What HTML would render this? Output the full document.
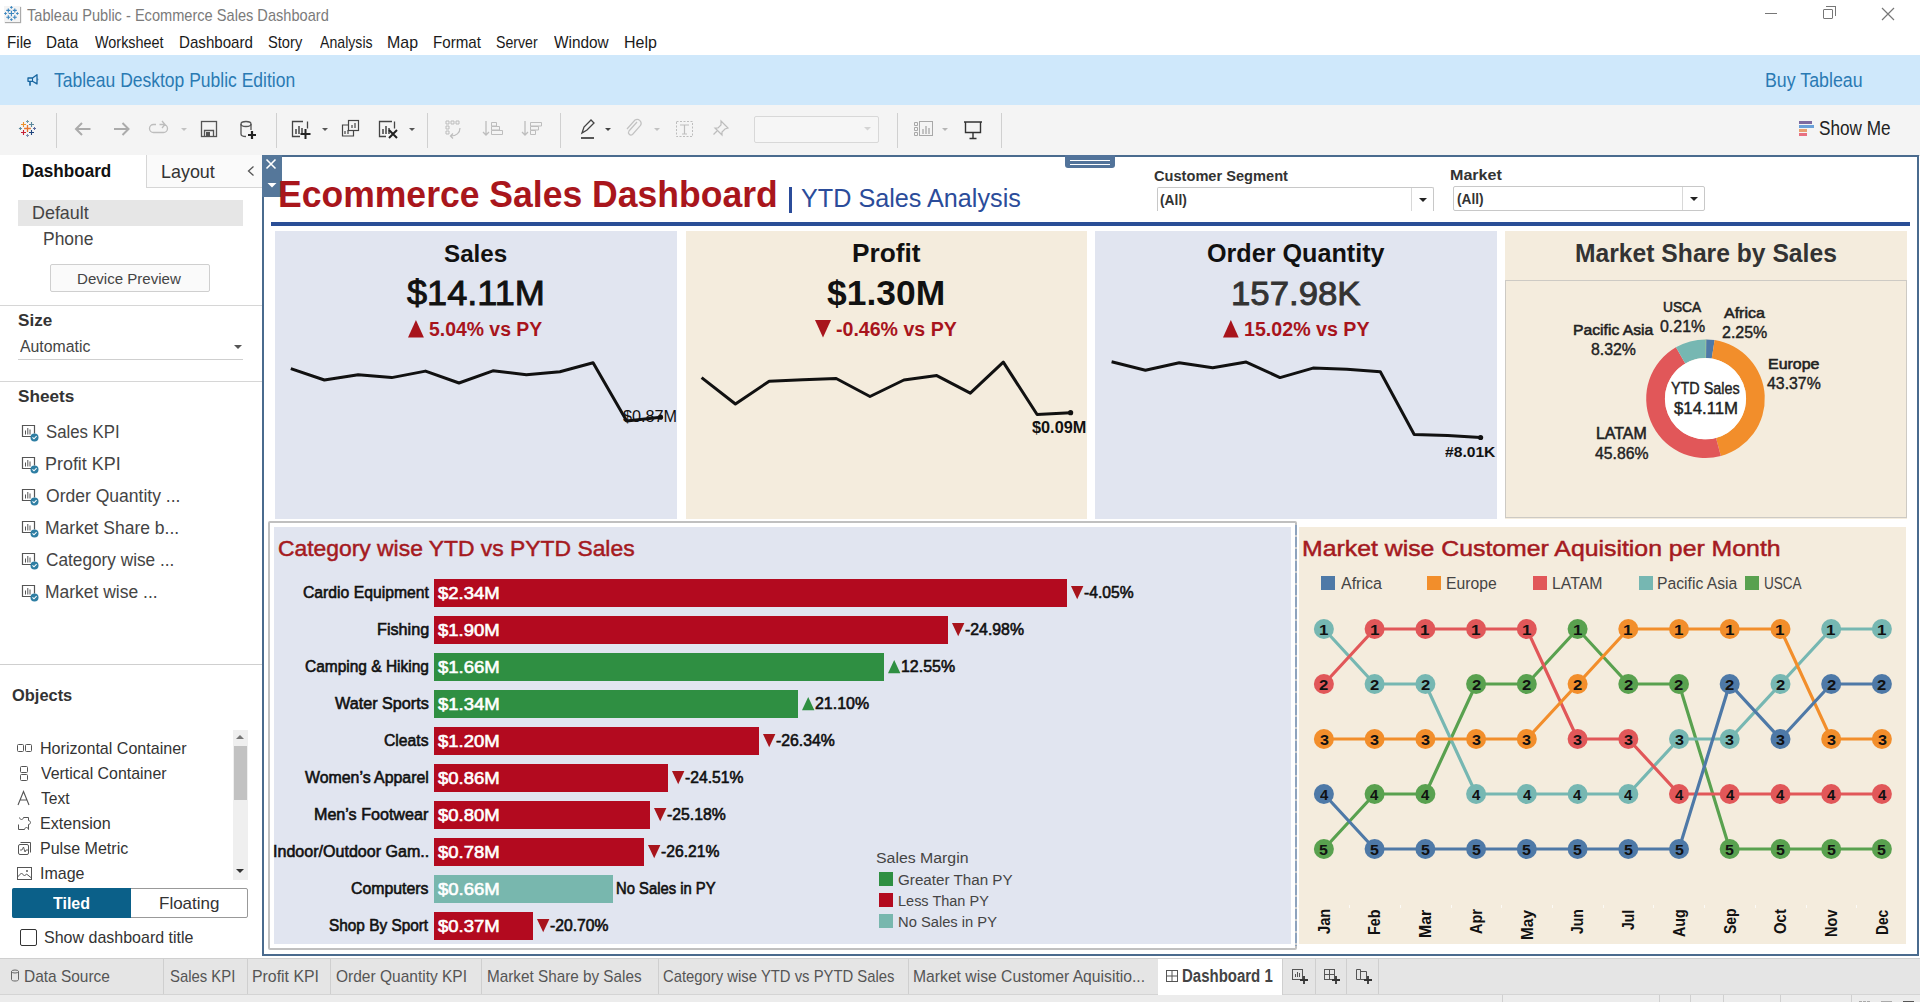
<!DOCTYPE html>
<html><head><meta charset="utf-8">
<style>
*{box-sizing:border-box;margin:0;padding:0}
html,body{width:1920px;height:1002px;overflow:hidden;background:#fff;font-family:"Liberation Sans",sans-serif;}
.a{position:absolute;white-space:nowrap}
#titlebar{left:0;top:0;width:1920px;height:28px;background:#fff}
#menubar{left:0;top:28px;width:1920px;height:27px;background:#fff}
#menubar span{position:absolute;top:6px;font-size:15px;color:#1a1a1a}
#banner{left:0;top:55px;width:1920px;height:50px;background:#cfe8fb}
#toolbar{left:0;top:105px;width:1920px;height:51px;background:#f4f4f4;border-bottom:1px solid #d4d4d4}
.sep{position:absolute;top:113px;width:1px;height:35px;background:#d0d0d0}
#left{left:0;top:155px;width:262px;height:803px;background:#fff}
.hr{position:absolute;height:1px;background:#d6d6d6}
#tabs{left:0;top:958px;width:1920px;height:44px;background:#e5e5e5}
.tab{position:absolute;top:0;height:35px;font-size:15px;color:#555;line-height:35px;border-right:1px solid #cfcfcf}
</style></head><body>
<!-- title bar -->
<div class="a" id="titlebar"></div>
<div class="a" style="left:4px;top:6px;width:16px;height:16px;background:#f4f4f4;box-shadow:1px 1px 1px #aaa"></div><svg class="a" style="left:0;top:0" width="24" height="26"><path d="M8.7 13.5h5.4M11.4 10.8v5.4" stroke="#3a85be" stroke-width="1.1"/><path d="M6.300000000000001 10.4h4M8.3 8.4v4" stroke="#3a85be" stroke-width="1.1"/><path d="M12.8 10.4h4M14.8 8.4v4" stroke="#3a85be" stroke-width="1.1"/><path d="M6.300000000000001 17.2h4M8.3 15.2v4" stroke="#3a85be" stroke-width="1.1"/><path d="M12.8 17.2h4M14.8 15.2v4" stroke="#3a85be" stroke-width="1.1"/><path d="M10.1 7.4h2.6M11.4 6.1000000000000005v2.6" stroke="#3a85be" stroke-width="1"/><path d="M10.1 19.6h2.6M11.4 18.3v2.6" stroke="#3a85be" stroke-width="1"/><path d="M4.2 13.5h2.6M5.5 12.2v2.6" stroke="#3a85be" stroke-width="1"/><path d="M16.099999999999998 13.5h2.6M17.4 12.2v2.6" stroke="#3a85be" stroke-width="1"/></svg>
<div class="a" style="left:1765px;top:13px;width:12px;height:1px;background:#777"></div>
<div class="a" style="left:1823px;top:9px;width:10px;height:10px;border:1px solid #777;border-radius:1px"></div>
<div class="a" style="left:1826px;top:6px;width:10px;height:10px;border-top:1px solid #777;border-right:1px solid #777"></div>
<svg class="a" style="left:1881px;top:7px" width="14" height="14"><path d="M1 1L13 13M13 1L1 13" stroke="#777" stroke-width="1.2"/></svg>
<!-- menu -->
<div class="a" id="menubar">
</div>
<!-- banner -->
<div class="a" id="banner"></div>
<svg class="a" style="left:0;top:55px" width="50" height="50" viewBox="0 55 50 50"><path d="M28 78h4.5l4.5-3.3v9.2l-4.5-2.6H28z" fill="none" stroke="#16649f" stroke-width="1.3" stroke-linejoin="round"/><path d="M32.5 78v3.3" stroke="#16649f" stroke-width="1.1"/><path d="M37.5 78.3a1.3 1.3 0 0 1 0 2.4z" fill="#16649f"/><rect x="29.2" y="81.3" width="1.6" height="4.4" fill="#16649f"/></svg>
<!-- toolbar -->
<div class="a" id="toolbar"></div>
<div class="sep" style="left:56px"></div><div class="sep" style="left:276px"></div><div class="sep" style="left:427px"></div><div class="sep" style="left:560px"></div><div class="sep" style="left:897px"></div><div class="sep" style="left:1001px"></div>
<div class="a" style="left:754px;top:116px;width:125px;height:27px;border:1px solid #d8d8d8;border-radius:2px;background:#f6f6f6"></div>
<svg class="a" style="left:0;top:105px" width="1010" height="50" viewBox="0 105 1010 50">
<g stroke-width="2" fill="none">
<!-- tableau logo -->
<path d="M24.1 128.5h6.8M27.5 125.1v6.8" stroke="#e8762d" stroke-width="1.3"/><path d="M21.0 124.5h5.0M23.5 122.0v5.0" stroke="#eb912b" stroke-width="1.1"/><path d="M29.0 124.5h5.0M31.5 122.0v5.0" stroke="#59879b" stroke-width="1.1"/><path d="M21.0 132.5h5.0M23.5 130.0v5.0" stroke="#c72035" stroke-width="1.1"/><path d="M29.0 132.5h5.0M31.5 130.0v5.0" stroke="#1f457e" stroke-width="1.1"/><path d="M26.0 121.5h3.0M27.5 120.0v3.0" stroke="#7199a6" stroke-width="1.0"/><path d="M26.0 135.5h3.0M27.5 134.0v3.0" stroke="#7b8cb0" stroke-width="1.0"/><path d="M18.9 128.5h3.0M20.4 127.0v3.0" stroke="#59879b" stroke-width="1.0"/><path d="M33.0 128.5h3.0M34.5 127.0v3.0" stroke="#5f6c9f" stroke-width="1.0"/>
<!-- back / fwd -->
<path d="M90.5 129H76M82 123l-6 6 6 6" stroke="#ababab"/>
<path d="M114 129h14.5M122.5 123l6 6-6 6" stroke="#ababab"/>
<path d="M156 124.5h-2.5a4 4 0 0 0 0 8h10a4 4 0 0 0 0-8h-4M162 121l3 3.5-3 3.5" stroke="#bdbdbd" stroke-width="1.3"/>
<path d="M181 128h6l-3 3z" fill="#c2c2c2" stroke="none"/>
<!-- save -->
<rect x="201.5" y="121.5" width="15" height="15" stroke="#555" stroke-width="1.3"/>
<path d="M204.5 136.5v-6h9v6" stroke="#555" stroke-width="1.3"/><rect x="206" y="132" width="4" height="4" fill="#555" stroke="none"/>
<!-- db+ -->
<path d="M241 124v10c0 1.5 2 2.5 5 2.5M251 124v6" stroke="#555" stroke-width="1.3"/><ellipse cx="246" cy="124" rx="5" ry="2.5" stroke="#555" stroke-width="1.3"/>
<path d="M252 131v8M248 135h8" stroke="#222" stroke-width="2.2"/>
<!-- new sheet -->
<path d="M303 121.5h-10.5v15H300M307.5 121.5v7" stroke="#444" stroke-width="1.3"/><path d="M296 134v-5M299 134v-8M302 134v-6" stroke="#444" stroke-width="1.5"/>
<path d="M305.5 129v10M300.5 134h10" stroke="#222" stroke-width="2"/>
<path d="M322 128h6l-3 3z" fill="#555" stroke="none"/>
<!-- duplicate -->
<rect x="348.5" y="120.5" width="10" height="10" stroke="#444" stroke-width="1.2"/><path d="M348.5 125h-6v11h11v-5.5" stroke="#444" stroke-width="1.2"/><path d="M352 128v-3M355 128v-5M345 134v-3M348 134v-4" stroke="#444" stroke-width="1.2"/>
<!-- clear sheet -->
<path d="M392 121.5h-12.5v15H386M394.5 121.5v7" stroke="#444" stroke-width="1.3"/><path d="M383 134v-5M386 134v-8M389 134v-6" stroke="#444" stroke-width="1.5"/>
<path d="M389 130l8 8M397 130l-8 8" stroke="#222" stroke-width="2"/>
<path d="M409 128h6l-3 3z" fill="#555" stroke="none"/>
<!-- swap -->
<path d="M446 121h3v3h-3zM451 121h3v3h-3zM456 121h3v3h-3zM446 126h3v3h-3zM446 131h3v3h-3z" stroke="#bcbcbc" stroke-width="1"/><path d="M460 128c0 5-4 8-9 8M453 133.5l-2.5 2.5 2.5 2.5" stroke="#bcbcbc" stroke-width="1.2"/>
<!-- sort -->
<path d="M486 121v14M483 132l3 3 3-3" stroke="#bdbdbd" stroke-width="1.3"/><path d="M491.5 122.5h5v3.5h-5zM491.5 126.5h8v3.5h-8zM491.5 130.5h11v4h-11z" stroke="#bdbdbd" stroke-width="1"/>
<path d="M525 121v14M522 132l3 3 3-3" stroke="#bdbdbd" stroke-width="1.3"/><path d="M530.5 122.5h11v3.5h-11zM530.5 126.5h8v3.5h-8zM530.5 130.5h5v4h-5z" stroke="#bdbdbd" stroke-width="1"/>
<!-- highlighter -->
<path d="M582 133l2-6 7-7 3 3-7 7z" stroke="#444" stroke-width="1.3"/><path d="M581 138h13" stroke="#444" stroke-width="1.8"/>
<path d="M605 128h6l-3 3z" fill="#444" stroke="none"/>
<!-- clip -->
<path d="M637 122l-8 9a2.5 2.5 0 0 0 3.5 3.5l8-9a4 4 0 0 0-5.5-5.5l-8 9" stroke="#c2c2c2" stroke-width="1.2"/>
<path d="M654 128h6l-3 3z" fill="#c2c2c2" stroke="none"/>
<!-- T -->
<rect x="676.5" y="121.5" width="16" height="15" stroke="#bdbdbd" stroke-width="1" stroke-dasharray="2 1.5"/><path d="M680 125h9M684.5 125v9M682 134h5" stroke="#bdbdbd" stroke-width="1.2"/>
<!-- pin -->
<path d="M721 121l7 7-3 1-3 3 0 3-7-7 3 0 3-3z M717 131l-3.5 3.5" stroke="#bdbdbd" stroke-width="1.2"/>
<path d="M864 127h7l-3.5 3.5z" fill="#d4d4d4" stroke="none"/>
<!-- cards -->
<path d="M914.5 122.5h3v3h-3zM914.5 127.5h3v3h-3zM914.5 132.5h3v3h-3z" stroke="#a8a8a8" stroke-width="1"/><rect x="919.5" y="121.5" width="13" height="14" stroke="#a8a8a8" stroke-width="1"/><path d="M923 134v-5M926 134v-8M929 134v-6" stroke="#a8a8a8" stroke-width="1.3"/>
<path d="M942 128h6l-3 3z" fill="#b5b5b5" stroke="none"/>
<!-- presentation -->
<path d="M964 122h18M965.5 122.5v10h15v-10M973 132.5v6M969.5 138.5h7" stroke="#333" stroke-width="1.4"/>
</g></svg>
<div class="a" style="left:1799px;top:121px;width:13px;height:3px;background:#7d6aa0"></div>
<div class="a" style="left:1799px;top:125px;width:15px;height:3px;background:#6aa0d8"></div>
<div class="a" style="left:1799px;top:129px;width:8px;height:3px;background:#e8a070"></div>
<div class="a" style="left:1799px;top:133px;width:8px;height:3px;background:#e87080"></div>

<!-- left panel -->
<div class="a" id="left"></div>
<div class="a" style="left:146px;top:155px;width:116px;height:33px;background:#fafafa;border-left:1px solid #d6d6d6;border-bottom:1px solid #d6d6d6"></div>
<div class="hr" style="left:0;top:187px;width:146px;background:#fff"></div>
<div class="a" style="left:18px;top:200px;width:225px;height:26px;background:#e6e6e6"></div>
<div class="a" style="left:50px;top:264px;width:160px;height:28px;border:1px solid #cfcfcf;border-radius:2px;background:#fafafa;text-align:center;font-size:15px;line-height:26px;color:#444"></div>
<div class="hr" style="left:0;top:305px;width:262px"></div>
<div class="a" style="left:234px;top:345px;width:0;height:0;border-left:4px solid transparent;border-right:4px solid transparent;border-top:4px solid #555"></div>
<div class="hr" style="left:18px;top:359px;width:225px;background:#cfcfcf"></div>
<div class="hr" style="left:0;top:381px;width:262px"></div>
<svg class="a" style="left:20px;top:423px" width="22" height="20" viewBox="0 0 22 20"><path d="M12.5 13.5H2.5V2.5h12v8" fill="none" stroke="#555" stroke-width="1.2"/><path d="M5.5 11.5v-4M7.8 11.5v-6.5M10 11.5v-5" stroke="#555" stroke-width="1"/><circle cx="14.5" cy="14.5" r="4" fill="#2e7ea3"/><path d="M12.5 14.3l1.5 1.5 2.6-2.6" fill="none" stroke="#fff" stroke-width="1.1"/></svg>
<svg class="a" style="left:20px;top:455px" width="22" height="20" viewBox="0 0 22 20"><path d="M12.5 13.5H2.5V2.5h12v8" fill="none" stroke="#555" stroke-width="1.2"/><path d="M5.5 11.5v-4M7.8 11.5v-6.5M10 11.5v-5" stroke="#555" stroke-width="1"/><circle cx="14.5" cy="14.5" r="4" fill="#2e7ea3"/><path d="M12.5 14.3l1.5 1.5 2.6-2.6" fill="none" stroke="#fff" stroke-width="1.1"/></svg>
<svg class="a" style="left:20px;top:487px" width="22" height="20" viewBox="0 0 22 20"><path d="M12.5 13.5H2.5V2.5h12v8" fill="none" stroke="#555" stroke-width="1.2"/><path d="M5.5 11.5v-4M7.8 11.5v-6.5M10 11.5v-5" stroke="#555" stroke-width="1"/><circle cx="14.5" cy="14.5" r="4" fill="#2e7ea3"/><path d="M12.5 14.3l1.5 1.5 2.6-2.6" fill="none" stroke="#fff" stroke-width="1.1"/></svg>
<svg class="a" style="left:20px;top:519px" width="22" height="20" viewBox="0 0 22 20"><path d="M12.5 13.5H2.5V2.5h12v8" fill="none" stroke="#555" stroke-width="1.2"/><path d="M5.5 11.5v-4M7.8 11.5v-6.5M10 11.5v-5" stroke="#555" stroke-width="1"/><circle cx="14.5" cy="14.5" r="4" fill="#2e7ea3"/><path d="M12.5 14.3l1.5 1.5 2.6-2.6" fill="none" stroke="#fff" stroke-width="1.1"/></svg>
<svg class="a" style="left:20px;top:551px" width="22" height="20" viewBox="0 0 22 20"><path d="M12.5 13.5H2.5V2.5h12v8" fill="none" stroke="#555" stroke-width="1.2"/><path d="M5.5 11.5v-4M7.8 11.5v-6.5M10 11.5v-5" stroke="#555" stroke-width="1"/><circle cx="14.5" cy="14.5" r="4" fill="#2e7ea3"/><path d="M12.5 14.3l1.5 1.5 2.6-2.6" fill="none" stroke="#fff" stroke-width="1.1"/></svg>
<svg class="a" style="left:20px;top:583px" width="22" height="20" viewBox="0 0 22 20"><path d="M12.5 13.5H2.5V2.5h12v8" fill="none" stroke="#555" stroke-width="1.2"/><path d="M5.5 11.5v-4M7.8 11.5v-6.5M10 11.5v-5" stroke="#555" stroke-width="1"/><circle cx="14.5" cy="14.5" r="4" fill="#2e7ea3"/><path d="M12.5 14.3l1.5 1.5 2.6-2.6" fill="none" stroke="#fff" stroke-width="1.1"/></svg>
<div class="hr" style="left:0;top:664px;width:262px;background:#cfcfcf"></div>
<svg class="a" style="left:16px;top:740.0px" width="18" height="17" viewBox="0 0 18 17"><rect x="1.5" y="4.5" width="6" height="7" rx="1" fill="none" stroke="#555"/><rect x="9.5" y="4.5" width="6" height="7" rx="1" fill="none" stroke="#555"/></svg>
<svg class="a" style="left:16px;top:765.0px" width="18" height="17" viewBox="0 0 18 17"><rect x="4.5" y="1.5" width="7" height="6" rx="1" fill="none" stroke="#555"/><rect x="4.5" y="9.5" width="7" height="6" rx="1" fill="none" stroke="#555"/></svg>
<svg class="a" style="left:16px;top:790.0px" width="18" height="17" viewBox="0 0 18 17"><path d="M2 15L7.5 1.5 13 15M4.5 10h6" fill="none" stroke="#555" stroke-width="1.1"/></svg>
<svg class="a" style="left:16px;top:815.0px" width="18" height="17" viewBox="0 0 18 17"><path d="M2.5 9.5v5h6c0-1 1-2 2-2s2 1 2 2V9.5c1 0 2-1 2-2s-1-2-2-2v-3h-5c0 1-1 2-2 2s-2-1-2-2" fill="none" stroke="#555" stroke-width="1"/></svg>
<svg class="a" style="left:16px;top:840.0px" width="18" height="17" viewBox="0 0 18 17"><rect x="2.5" y="4.5" width="10" height="10" rx="1.5" fill="none" stroke="#555"/><path d="M4.5 2.5h10v10" fill="none" stroke="#555"/><path d="M4 10h2l1.5-3 1.5 5 1-2h2" fill="none" stroke="#555" stroke-width="0.9"/></svg>
<svg class="a" style="left:16px;top:865.0px" width="18" height="17" viewBox="0 0 18 17"><rect x="1.5" y="2.5" width="14" height="12" fill="none" stroke="#555"/><path d="M1.5 12l4-4 3 3 2-2 5 4" fill="none" stroke="#555"/><circle cx="11" cy="6" r="1" fill="#555"/></svg>
<div class="a" style="left:233px;top:730px;width:15px;height:150px;background:#efefef"></div>
<div class="a" style="left:234px;top:746px;width:13px;height:54px;background:#c2c2c2"></div>
<div class="a" style="left:236px;top:735px;width:0;height:0;border-left:4px solid transparent;border-right:4px solid transparent;border-bottom:4px solid #777"></div>
<div class="a" style="left:236px;top:869px;width:0;height:0;border-left:4px solid transparent;border-right:4px solid transparent;border-top:4px solid #333"></div>
<div class="a" style="left:12px;top:888px;width:236px;height:30px;border:1px solid #999;border-radius:2px;background:#fff"></div>
<div class="a" style="left:12px;top:888px;width:119px;height:30px;background:#0b6089;border-radius:2px 0 0 2px;color:#fff;font-weight:bold;font-size:15px;text-align:center;line-height:30px"></div>
<div class="a" style="left:131px;top:888px;width:117px;height:30px;color:#333;font-size:15px;text-align:center;line-height:30px"></div>
<div class="a" style="left:20px;top:929px;width:17px;height:17px;border:1px solid #333;border-radius:2px;background:#fff"></div>

<!-- dashboard -->
<div class="a" style="left:262px;top:155px;width:1657px;height:801px;border:2px solid #4a6b8e;background:#fff"></div>
<div class="a" style="left:262px;top:155px;width:20px;height:42px;background:#55779a"></div>
<svg class="a" style="left:262px;top:155px" width="20" height="42"><path d="M4.5 4.5l9 9M13.5 4.5l-9 9" stroke="#fff" stroke-width="1.6"/><path d="M5.5 28h9l-4.5 4.5z" fill="#fff"/></svg>
<div class="a" style="left:1065px;top:155px;width:50px;height:13px;background:#52739a;border-radius:0 0 3px 3px"></div>
<div class="a" style="left:1070px;top:160px;width:40px;height:1.3px;background:#fff"></div>
<div class="a" style="left:1070px;top:164px;width:40px;height:1.3px;background:#fff"></div>
<div class="a" style="left:277.89px;top:175.74px;font-size:37.25px;line-height:37.25px;font-weight:bold;color:#a9161c;transform:scaleX(0.9540);transform-origin:0 0;">Ecommerce Sales Dashboard</div>
<div class="a" style="left:789px;top:187px;width:3px;height:25.5px;background:#2b4c9a"></div>
<div class="a" style="left:801.07px;top:185.72px;font-size:25.80px;line-height:25.80px;font-weight:normal;color:#2b4c9a;transform:scaleX(0.9766);transform-origin:0 0;">YTD Sales Analysis</div>
<div class="a" style="left:271px;top:222px;width:1639px;height:4px;background:#2a4e96"></div>
<div class="a" style="left:1154.22px;top:168.58px;font-size:14.78px;line-height:14.78px;font-weight:bold;color:#333;transform:scaleX(0.9893);transform-origin:0 0;">Customer Segment</div>
<div class="a" style="left:1157px;top:187px;width:277px;height:24px;border:1px solid #c8c8c8;border-bottom:none;border-radius:2px 2px 0 0;background:#fff"></div>
<div class="a" style="left:1411px;top:188px;width:1px;height:23px;background:#d8d8d8"></div>
<div class="a" style="left:1418.5px;top:197.5px;width:0;height:0;border-left:4px solid transparent;border-right:4px solid transparent;border-top:4.5px solid #222"></div>
<div class="a" style="left:1160.41px;top:192.53px;font-size:14.78px;line-height:14.78px;font-weight:bold;color:#333;transform:scaleX(0.9350);transform-origin:0 0;">(All)</div>
<div class="a" style="left:1449.55px;top:167.53px;font-size:14.78px;line-height:14.78px;font-weight:bold;color:#333;transform:scaleX(1.0895);transform-origin:0 0;">Market</div>
<div class="a" style="left:1453px;top:186px;width:252px;height:25px;border:1px solid #c8c8c8;border-radius:2px;background:#fff"></div>
<div class="a" style="left:1682px;top:187px;width:1px;height:23px;background:#d8d8d8"></div>
<div class="a" style="left:1689.5px;top:196.5px;width:0;height:0;border-left:4px solid transparent;border-right:4px solid transparent;border-top:4.5px solid #222"></div>
<div class="a" style="left:1456.51px;top:190.73px;font-size:15.14px;line-height:15.14px;font-weight:bold;color:#333;transform:scaleX(0.9054);transform-origin:0 0;">(All)</div>
<div class="a" style="left:275px;top:231px;width:402px;height:288px;background:#e1e5f0"></div>
<div class="a" style="left:686px;top:231px;width:401px;height:288px;background:#f4ecdd"></div>
<div class="a" style="left:1095px;top:231px;width:402px;height:288px;background:#e1e5f0"></div>
<div class="a" style="left:1505px;top:231px;width:402px;height:288px;background:#f4ecdd"></div>
<div class="a" style="left:1505px;top:280px;width:402px;height:238px;border:1px solid #cdcac4"></div>
<div class="a" style="left:443.87px;top:241.56px;font-size:24.64px;line-height:24.64px;font-weight:bold;color:#111;transform:scaleX(0.9827);transform-origin:0 0;">Sales</div>
<div class="a" style="left:407.24px;top:275.73px;font-size:34.20px;line-height:34.20px;font-weight:normal;color:#111;transform:scaleX(1.0565);transform-origin:0 0;-webkit-text-stroke:0.9px #111">$14.11M</div>
<div class="a" style="left:429.32px;top:319.52px;font-size:19.57px;line-height:19.57px;font-weight:bold;color:#a8141c;transform:scaleX(0.9913);transform-origin:0 0;">5.04% vs PY</div>
<div class="a" style="left:851.59px;top:240.56px;font-size:24.93px;line-height:24.93px;font-weight:bold;color:#111;transform:scaleX(1.0524);transform-origin:0 0;">Profit</div>
<div class="a" style="left:827.27px;top:275.73px;font-size:34.20px;line-height:34.20px;font-weight:bold;color:#111;transform:scaleX(1.0366);transform-origin:0 0;">$1.30M</div>
<div class="a" style="left:836.02px;top:319.52px;font-size:19.57px;line-height:19.57px;font-weight:bold;color:#a8141c;transform:scaleX(1.0005);transform-origin:0 0;">-0.46% vs PY</div>
<div class="a" style="left:1206.99px;top:240.57px;font-size:25.51px;line-height:25.51px;font-weight:bold;color:#111;transform:scaleX(0.9865);transform-origin:0 0;">Order Quantity</div>
<div class="a" style="left:1230.99px;top:276.72px;font-size:33.91px;line-height:33.91px;font-weight:normal;color:#333;transform:scaleX(1.0256);transform-origin:0 0;-webkit-text-stroke:0.9px #333">157.98K</div>
<div class="a" style="left:1243.82px;top:319.52px;font-size:19.57px;line-height:19.57px;font-weight:bold;color:#a8141c;transform:scaleX(1.0036);transform-origin:0 0;">15.02% vs PY</div>
<svg class="a" style="left:408.2px;top:320.1px" width="16.400000000000034" height="18.099999999999966"><path d="M7.950000000000017 0L15.900000000000034 17.599999999999966H0z" fill="#a8141c"/></svg>
<svg class="a" style="left:815.4px;top:320.1px" width="16.5" height="18.099999999999966"><path d="M0 0H16.0L8.0 17.599999999999966z" fill="#a8141c"/></svg>
<svg class="a" style="left:1223px;top:320.1px" width="16.200000000000045" height="18.099999999999966"><path d="M7.850000000000023 0L15.700000000000045 17.599999999999966H0z" fill="#a8141c"/></svg>
<svg class="a" style="left:0;top:0" width="1920" height="1002">
<path d="M290.8 368.7 L324.4 380.0 L358.2 374.7 L391.7 377.6 L425.5 371.1 L459.0 383.0 L492.9 370.8 L526.4 374.7 L559.9 371.7 L593.1 362.7 L626.7 421.0 L660.5 417.2" fill="none" stroke="#111" stroke-width="3" stroke-linejoin="round"/>
<circle cx="660.5" cy="417.2" r="2.6" fill="#111"/>
<path d="M701.6 377.6 L735.4 404.0 L769.2 381.2 L802.7 379.7 L836.2 378.5 L870.0 396.5 L903.9 380.0 L936.8 375.6 L970.3 393.2 L1003.3 362.1 L1037.1 414.5 L1070.6 412.7" fill="none" stroke="#111" stroke-width="3" stroke-linejoin="round"/>
<circle cx="1070.6" cy="412.7" r="2.6" fill="#111"/>
<path d="M1111.6 361.8 L1145.4 370.2 L1179.2 362.7 L1212.7 367.8 L1246.2 362.1 L1280.0 377.6 L1313.0 368.1 L1346.8 369.3 L1380.3 371.7 L1414.2 434.5 L1447.7 435.4 L1480.6 437.5" fill="none" stroke="#111" stroke-width="3" stroke-linejoin="round"/>
<circle cx="1480.6" cy="437.5" r="2.6" fill="#111"/>
</svg>
<div class="a" style="left:622.64px;top:407.68px;font-size:16.38px;line-height:16.38px;font-weight:normal;color:#111;transform:scaleX(0.9898);transform-origin:0 0;">$0.87M</div>
<div class="a" style="left:1032.36px;top:419.55px;font-size:15.94px;line-height:15.94px;font-weight:bold;color:#111;transform:scaleX(1.0214);transform-origin:0 0;">$0.09M</div>
<div class="a" style="left:1445.37px;top:443.67px;font-size:15.22px;line-height:15.22px;font-weight:bold;color:#111;transform:scaleX(1.0268);transform-origin:0 0;">#8.01K</div>
<div class="a" style="left:1575.10px;top:239.68px;font-size:26.09px;line-height:26.09px;font-weight:bold;color:#333;transform:scaleX(0.9458);transform-origin:0 0;">Market Share by Sales</div>
<svg class="a" style="left:0;top:0" width="1920" height="1002">
<path d="M1705.50 339.40A59.3 59.3 0 0 1 1706.28 339.41L1706.04 358.10A40.6 40.6 0 0 0 1705.50 358.10z" fill="#59a14f"/>
<path d="M1706.28 339.41A59.3 59.3 0 0 1 1714.63 340.11L1711.75 358.58A40.6 40.6 0 0 0 1706.04 358.10z" fill="#4e79a7"/>
<path d="M1714.63 340.11A59.3 59.3 0 0 1 1720.86 455.98L1716.02 437.91A40.6 40.6 0 0 0 1711.75 358.58z" fill="#f28e2b"/>
<path d="M1720.86 455.98A59.3 59.3 0 0 1 1675.93 347.30L1685.25 363.51A40.6 40.6 0 0 0 1716.02 437.91z" fill="#e15759"/>
<path d="M1675.93 347.30A59.3 59.3 0 0 1 1705.50 339.40L1705.50 358.10A40.6 40.6 0 0 0 1685.25 363.51z" fill="#76b7b2"/>
<circle cx="1705.5" cy="398.7" r="40.6" fill="#fff"/>
</svg>
<div class="a" style="left:1662.77px;top:299.68px;font-size:14.78px;line-height:14.78px;font-weight:normal;color:#222;transform:scaleX(0.9320);transform-origin:0 0;-webkit-text-stroke:0.55px #222">USCA</div>
<div class="a" style="left:1659.96px;top:318.75px;font-size:15.65px;line-height:15.65px;font-weight:normal;color:#222;transform:scaleX(1.0185);transform-origin:0 0;-webkit-text-stroke:0.4px #222">0.21%</div>
<div class="a" style="left:1723.80px;top:305.58px;font-size:14.78px;line-height:14.78px;font-weight:normal;color:#222;transform:scaleX(1.0829);transform-origin:0 0;-webkit-text-stroke:0.55px #222">Africa</div>
<div class="a" style="left:1721.70px;top:324.65px;font-size:15.65px;line-height:15.65px;font-weight:normal;color:#222;transform:scaleX(1.0222);transform-origin:0 0;-webkit-text-stroke:0.4px #222">2.25%</div>
<div class="a" style="left:1572.74px;top:321.69px;font-size:15.07px;line-height:15.07px;font-weight:normal;color:#222;transform:scaleX(1.0420);transform-origin:0 0;-webkit-text-stroke:0.55px #222">Pacific Asia</div>
<div class="a" style="left:1590.69px;top:341.75px;font-size:15.65px;line-height:15.65px;font-weight:normal;color:#222;transform:scaleX(1.0134);transform-origin:0 0;-webkit-text-stroke:0.4px #222">8.32%</div>
<div class="a" style="left:1767.93px;top:356.65px;font-size:14.35px;line-height:14.35px;font-weight:normal;color:#222;transform:scaleX(1.1107);transform-origin:0 0;-webkit-text-stroke:0.55px #222">Europe</div>
<div class="a" style="left:1767.08px;top:375.60px;font-size:15.65px;line-height:15.65px;font-weight:normal;color:#222;transform:scaleX(1.0138);transform-origin:0 0;-webkit-text-stroke:0.4px #222">43.37%</div>
<div class="a" style="left:1671.34px;top:380.75px;font-size:15.65px;line-height:15.65px;font-weight:normal;color:#222;transform:scaleX(0.9191);transform-origin:0 0;-webkit-text-stroke:0.4px #222">YTD Sales</div>
<div class="a" style="left:1674.23px;top:400.70px;font-size:15.65px;line-height:15.65px;font-weight:normal;color:#222;transform:scaleX(1.0720);transform-origin:0 0;-webkit-text-stroke:0.4px #222">$14.11M</div>
<div class="a" style="left:1596.43px;top:425.65px;font-size:15.65px;line-height:15.65px;font-weight:normal;color:#222;transform:scaleX(1.0159);transform-origin:0 0;-webkit-text-stroke:0.55px #222">LATAM</div>
<div class="a" style="left:1595.28px;top:445.60px;font-size:15.65px;line-height:15.65px;font-weight:normal;color:#222;transform:scaleX(1.0100);transform-origin:0 0;-webkit-text-stroke:0.4px #222">45.86%</div>
<div class="a" style="left:268px;top:521px;width:1029px;height:429px;border:2px solid #c0c0c0;border-radius:2px"></div>
<div class="a" style="left:1295px;top:525px;width:2px;height:421px;background:repeating-linear-gradient(#8ea3bd 0 10px,#cfcfcf 10px 12px)"></div>
<div class="a" style="left:274px;top:527px;width:1017px;height:417px;background:#e1e5f0"></div>
<div class="a" style="left:277.76px;top:536.59px;font-size:22.90px;line-height:22.90px;font-weight:normal;color:#a51a1f;transform:scaleX(0.9987);transform-origin:0 0;-webkit-text-stroke:0.5px #a51a1f">Category wise YTD vs PYTD Sales</div>
<div class="a" style="left:434px;top:579px;width:633.0px;height:28px;background:#b30a1f"></div>
<div class="a" style="left:302.51px;top:583.50px;font-size:16.23px;line-height:16.23px;font-weight:normal;color:#111;transform:scaleX(0.9693);transform-origin:0 0;-webkit-text-stroke:0.6px #111">Cardio Equipment</div>
<div class="a" style="left:438.42px;top:585.58px;font-size:16.67px;line-height:16.67px;font-weight:normal;color:#fff;transform:scaleX(1.1094);transform-origin:0 0;-webkit-text-stroke:0.6px #fff">$2.34M</div>
<svg class="a" style="left:1071.3px;top:585.9px" width="12.900000000000091" height="13.700000000000045"><path d="M0 0H12.400000000000091L6.2000000000000455 13.200000000000045z" fill="#a8141c"/></svg>
<div class="a" style="left:1084.10px;top:584.57px;font-size:15.80px;line-height:15.80px;font-weight:normal;color:#111;transform:scaleX(0.9895);transform-origin:0 0;-webkit-text-stroke:0.6px #111">-4.05%</div>
<div class="a" style="left:434px;top:616px;width:513.9px;height:28px;background:#b30a1f"></div>
<div class="a" style="left:377.10px;top:620.50px;font-size:16.23px;line-height:16.23px;font-weight:normal;color:#111;transform:scaleX(0.9981);transform-origin:0 0;-webkit-text-stroke:0.6px #111">Fishing</div>
<div class="a" style="left:438.42px;top:622.58px;font-size:16.67px;line-height:16.67px;font-weight:normal;color:#fff;transform:scaleX(1.1094);transform-origin:0 0;-webkit-text-stroke:0.6px #fff">$1.90M</div>
<svg class="a" style="left:952.1999999999999px;top:622.9px" width="12.899999999999977" height="13.700000000000045"><path d="M0 0H12.399999999999977L6.199999999999989 13.200000000000045z" fill="#a8141c"/></svg>
<div class="a" style="left:964.99px;top:621.57px;font-size:15.80px;line-height:15.80px;font-weight:normal;color:#111;transform:scaleX(1.0021);transform-origin:0 0;-webkit-text-stroke:0.6px #111">-24.98%</div>
<div class="a" style="left:434px;top:653px;width:450.1px;height:28px;background:#2f8f42"></div>
<div class="a" style="left:305.22px;top:657.50px;font-size:16.23px;line-height:16.23px;font-weight:normal;color:#111;transform:scaleX(0.9549);transform-origin:0 0;-webkit-text-stroke:0.6px #111">Camping &amp; Hiking</div>
<div class="a" style="left:438.42px;top:659.58px;font-size:16.67px;line-height:16.67px;font-weight:normal;color:#fff;transform:scaleX(1.1094);transform-origin:0 0;-webkit-text-stroke:0.6px #fff">$1.66M</div>
<svg class="a" style="left:888.4px;top:659.9px" width="12.899999999999977" height="13.700000000000045"><path d="M6.199999999999989 0L12.399999999999977 13.200000000000045H0z" fill="#2f8f42"/></svg>
<div class="a" style="left:900.70px;top:658.57px;font-size:15.80px;line-height:15.80px;font-weight:normal;color:#111;transform:scaleX(1.0098);transform-origin:0 0;-webkit-text-stroke:0.6px #111">12.55%</div>
<div class="a" style="left:434px;top:690px;width:363.9px;height:28px;background:#2f8f42"></div>
<div class="a" style="left:334.92px;top:694.50px;font-size:16.23px;line-height:16.23px;font-weight:normal;color:#111;transform:scaleX(0.9979);transform-origin:0 0;-webkit-text-stroke:0.6px #111">Water Sports</div>
<div class="a" style="left:438.42px;top:696.58px;font-size:16.67px;line-height:16.67px;font-weight:normal;color:#fff;transform:scaleX(1.1094);transform-origin:0 0;-webkit-text-stroke:0.6px #fff">$1.34M</div>
<svg class="a" style="left:802.1999999999999px;top:696.9px" width="12.899999999999977" height="13.700000000000045"><path d="M6.199999999999989 0L12.399999999999977 13.200000000000045H0z" fill="#2f8f42"/></svg>
<div class="a" style="left:814.90px;top:695.57px;font-size:15.80px;line-height:15.80px;font-weight:normal;color:#111;transform:scaleX(1.0098);transform-origin:0 0;-webkit-text-stroke:0.6px #111">21.10%</div>
<div class="a" style="left:434px;top:727px;width:324.9px;height:28px;background:#b30a1f"></div>
<div class="a" style="left:384.31px;top:731.50px;font-size:16.23px;line-height:16.23px;font-weight:normal;color:#111;transform:scaleX(0.9678);transform-origin:0 0;-webkit-text-stroke:0.6px #111">Cleats</div>
<div class="a" style="left:438.42px;top:733.58px;font-size:16.67px;line-height:16.67px;font-weight:normal;color:#fff;transform:scaleX(1.1094);transform-origin:0 0;-webkit-text-stroke:0.6px #fff">$1.20M</div>
<svg class="a" style="left:763.1999999999999px;top:733.9px" width="12.899999999999977" height="13.700000000000045"><path d="M0 0H12.399999999999977L6.199999999999989 13.200000000000045z" fill="#a8141c"/></svg>
<div class="a" style="left:775.99px;top:732.57px;font-size:15.80px;line-height:15.80px;font-weight:normal;color:#111;transform:scaleX(0.9986);transform-origin:0 0;-webkit-text-stroke:0.6px #111">-26.34%</div>
<div class="a" style="left:434px;top:764px;width:233.9px;height:28px;background:#b30a1f"></div>
<div class="a" style="left:305.42px;top:768.50px;font-size:16.23px;line-height:16.23px;font-weight:normal;color:#111;transform:scaleX(0.9787);transform-origin:0 0;-webkit-text-stroke:0.6px #111">Women’s Apparel</div>
<div class="a" style="left:438.42px;top:770.58px;font-size:16.67px;line-height:16.67px;font-weight:normal;color:#fff;transform:scaleX(1.1094);transform-origin:0 0;-webkit-text-stroke:0.6px #fff">$0.86M</div>
<svg class="a" style="left:672.1999999999999px;top:770.9px" width="12.899999999999977" height="13.700000000000045"><path d="M0 0H12.399999999999977L6.199999999999989 13.200000000000045z" fill="#a8141c"/></svg>
<div class="a" style="left:684.99px;top:769.57px;font-size:15.80px;line-height:15.80px;font-weight:normal;color:#111;transform:scaleX(0.9934);transform-origin:0 0;-webkit-text-stroke:0.6px #111">-24.51%</div>
<div class="a" style="left:434px;top:801px;width:216.0px;height:28px;background:#b30a1f"></div>
<div class="a" style="left:314.21px;top:805.50px;font-size:16.23px;line-height:16.23px;font-weight:normal;color:#111;transform:scaleX(0.9928);transform-origin:0 0;-webkit-text-stroke:0.6px #111">Men’s Footwear</div>
<div class="a" style="left:438.42px;top:807.58px;font-size:16.67px;line-height:16.67px;font-weight:normal;color:#fff;transform:scaleX(1.1094);transform-origin:0 0;-webkit-text-stroke:0.6px #fff">$0.80M</div>
<svg class="a" style="left:654.3px;top:807.9px" width="12.899999999999977" height="13.700000000000045"><path d="M0 0H12.399999999999977L6.199999999999989 13.200000000000045z" fill="#a8141c"/></svg>
<div class="a" style="left:667.09px;top:806.57px;font-size:15.80px;line-height:15.80px;font-weight:normal;color:#111;transform:scaleX(0.9986);transform-origin:0 0;-webkit-text-stroke:0.6px #111">-25.18%</div>
<div class="a" style="left:434px;top:838px;width:210.1px;height:28px;background:#b30a1f"></div>
<div class="a" style="left:273.45px;top:842.50px;font-size:16.23px;line-height:16.23px;font-weight:normal;color:#111;transform:scaleX(0.9901);transform-origin:0 0;-webkit-text-stroke:0.6px #111">Indoor/Outdoor Gam..</div>
<div class="a" style="left:438.42px;top:844.58px;font-size:16.67px;line-height:16.67px;font-weight:normal;color:#fff;transform:scaleX(1.1094);transform-origin:0 0;-webkit-text-stroke:0.6px #fff">$0.78M</div>
<svg class="a" style="left:648.4px;top:844.9px" width="12.899999999999977" height="13.700000000000045"><path d="M0 0H12.399999999999977L6.199999999999989 13.200000000000045z" fill="#a8141c"/></svg>
<div class="a" style="left:661.19px;top:843.57px;font-size:15.80px;line-height:15.80px;font-weight:normal;color:#111;transform:scaleX(0.9934);transform-origin:0 0;-webkit-text-stroke:0.6px #111">-26.21%</div>
<div class="a" style="left:434px;top:875px;width:178.9px;height:28px;background:#78b7ae"></div>
<div class="a" style="left:351.31px;top:879.50px;font-size:16.23px;line-height:16.23px;font-weight:normal;color:#111;transform:scaleX(0.9770);transform-origin:0 0;-webkit-text-stroke:0.6px #111">Computers</div>
<div class="a" style="left:438.42px;top:881.58px;font-size:16.67px;line-height:16.67px;font-weight:normal;color:#fff;transform:scaleX(1.1094);transform-origin:0 0;-webkit-text-stroke:0.6px #fff">$0.66M</div>
<div class="a" style="left:616.32px;top:880.55px;font-size:15.94px;line-height:15.94px;font-weight:normal;color:#111;transform:scaleX(0.9288);transform-origin:0 0;-webkit-text-stroke:0.6px #111">No Sales in PY</div>
<div class="a" style="left:434px;top:912px;width:99.0px;height:28px;background:#b30a1f"></div>
<div class="a" style="left:329.21px;top:916.50px;font-size:16.23px;line-height:16.23px;font-weight:normal;color:#111;transform:scaleX(0.9480);transform-origin:0 0;-webkit-text-stroke:0.6px #111">Shop By Sport</div>
<div class="a" style="left:438.42px;top:918.58px;font-size:16.67px;line-height:16.67px;font-weight:normal;color:#fff;transform:scaleX(1.1094);transform-origin:0 0;-webkit-text-stroke:0.6px #fff">$0.37M</div>
<svg class="a" style="left:537.3px;top:918.9px" width="12.899999999999977" height="13.700000000000045"><path d="M0 0H12.399999999999977L6.199999999999989 13.200000000000045z" fill="#a8141c"/></svg>
<div class="a" style="left:550.09px;top:917.57px;font-size:15.80px;line-height:15.80px;font-weight:normal;color:#111;transform:scaleX(0.9934);transform-origin:0 0;-webkit-text-stroke:0.6px #111">-20.70%</div>
<div class="a" style="left:875.79px;top:850.71px;font-size:14.93px;line-height:14.93px;font-weight:normal;color:#444;transform:scaleX(1.0625);transform-origin:0 0;">Sales Margin</div>
<div class="a" style="left:879px;top:872.1px;width:14px;height:14px;background:#2f8f42"></div>
<div class="a" style="left:897.94px;top:871.57px;font-size:15.22px;line-height:15.22px;font-weight:normal;color:#444;transform:scaleX(0.9985);transform-origin:0 0;">Greater Than PY</div>
<div class="a" style="left:879px;top:893.1px;width:14px;height:14px;background:#b30a1f"></div>
<div class="a" style="left:897.54px;top:892.57px;font-size:15.22px;line-height:15.22px;font-weight:normal;color:#444;transform:scaleX(0.9526);transform-origin:0 0;">Less Than PY</div>
<div class="a" style="left:879px;top:914.1px;width:14px;height:14px;background:#78b7ae"></div>
<div class="a" style="left:897.52px;top:913.57px;font-size:15.22px;line-height:15.22px;font-weight:normal;color:#444;transform:scaleX(0.9671);transform-origin:0 0;">No Sales in PY</div>
<div class="a" style="left:1299px;top:527px;width:607px;height:417px;background:#f4ecdd"></div>
<div class="a" style="left:1302.41px;top:537.66px;font-size:22.46px;line-height:22.46px;font-weight:normal;color:#a51a1f;transform:scaleX(1.1052);transform-origin:0 0;-webkit-text-stroke:0.5px #a51a1f">Market wise Customer Aquisition per Month</div>
<div class="a" style="left:1321.1px;top:576.3px;width:13.7px;height:13.7px;background:#4e79a7"></div>
<div class="a" style="left:1340.80px;top:575.68px;font-size:16.67px;line-height:16.67px;font-weight:normal;color:#444;transform:scaleX(0.9605);transform-origin:0 0;">Africa</div>
<div class="a" style="left:1427px;top:576.3px;width:13.7px;height:13.7px;background:#f28e2b"></div>
<div class="a" style="left:1445.54px;top:575.68px;font-size:16.67px;line-height:16.67px;font-weight:normal;color:#444;transform:scaleX(0.9426);transform-origin:0 0;">Europe</div>
<div class="a" style="left:1533px;top:576.3px;width:13.7px;height:13.7px;background:#e15759"></div>
<div class="a" style="left:1551.63px;top:575.68px;font-size:16.67px;line-height:16.67px;font-weight:normal;color:#444;transform:scaleX(0.9501);transform-origin:0 0;">LATAM</div>
<div class="a" style="left:1639px;top:576.3px;width:13.7px;height:13.7px;background:#76b7b2"></div>
<div class="a" style="left:1657.44px;top:575.68px;font-size:16.67px;line-height:16.67px;font-weight:normal;color:#444;transform:scaleX(0.9423);transform-origin:0 0;">Pacific Asia</div>
<div class="a" style="left:1745.4px;top:576.3px;width:13.7px;height:13.7px;background:#59a14f"></div>
<div class="a" style="left:1763.58px;top:575.68px;font-size:16.67px;line-height:16.67px;font-weight:normal;color:#444;transform:scaleX(0.8133);transform-origin:0 0;">USCA</div>
<svg class="a" style="left:0;top:0" width="1920" height="1002">
<path d="M1323.9 849.0 L1374.6 794.0 L1425.4 794.0 L1476.1 684.0 L1526.8 684.0 L1577.6 629.0 L1628.3 684.0 L1679.0 684.0 L1729.7 849.0 L1780.5 849.0 L1831.2 849.0 L1881.9 849.0" fill="none" stroke="#59a14f" stroke-width="3.2"/>
<path d="M1323.9 629.0 L1374.6 684.0 L1425.4 684.0 L1476.1 794.0 L1526.8 794.0 L1577.6 794.0 L1628.3 794.0 L1679.0 739.0 L1729.7 739.0 L1780.5 684.0 L1831.2 629.0 L1881.9 629.0" fill="none" stroke="#76b7b2" stroke-width="3.2"/>
<path d="M1323.9 684.0 L1374.6 629.0 L1425.4 629.0 L1476.1 629.0 L1526.8 629.0 L1577.6 739.0 L1628.3 739.0 L1679.0 794.0 L1729.7 794.0 L1780.5 794.0 L1831.2 794.0 L1881.9 794.0" fill="none" stroke="#e15759" stroke-width="3.2"/>
<path d="M1323.9 739.0 L1374.6 739.0 L1425.4 739.0 L1476.1 739.0 L1526.8 739.0 L1577.6 684.0 L1628.3 629.0 L1679.0 629.0 L1729.7 629.0 L1780.5 629.0 L1831.2 739.0 L1881.9 739.0" fill="none" stroke="#f28e2b" stroke-width="3.2"/>
<path d="M1323.9 794.0 L1374.6 849.0 L1425.4 849.0 L1476.1 849.0 L1526.8 849.0 L1577.6 849.0 L1628.3 849.0 L1679.0 849.0 L1729.7 684.0 L1780.5 739.0 L1831.2 684.0 L1881.9 684.0" fill="none" stroke="#4e79a7" stroke-width="3.2"/>
<circle cx="1323.9" cy="849.0" r="10" fill="#59a14f"/>
<circle cx="1374.6" cy="794.0" r="10" fill="#59a14f"/>
<circle cx="1425.4" cy="794.0" r="10" fill="#59a14f"/>
<circle cx="1476.1" cy="684.0" r="10" fill="#59a14f"/>
<circle cx="1526.8" cy="684.0" r="10" fill="#59a14f"/>
<circle cx="1577.6" cy="629.0" r="10" fill="#59a14f"/>
<circle cx="1628.3" cy="684.0" r="10" fill="#59a14f"/>
<circle cx="1679.0" cy="684.0" r="10" fill="#59a14f"/>
<circle cx="1729.7" cy="849.0" r="10" fill="#59a14f"/>
<circle cx="1780.5" cy="849.0" r="10" fill="#59a14f"/>
<circle cx="1831.2" cy="849.0" r="10" fill="#59a14f"/>
<circle cx="1881.9" cy="849.0" r="10" fill="#59a14f"/>
<circle cx="1323.9" cy="629.0" r="10" fill="#76b7b2"/>
<circle cx="1374.6" cy="684.0" r="10" fill="#76b7b2"/>
<circle cx="1425.4" cy="684.0" r="10" fill="#76b7b2"/>
<circle cx="1476.1" cy="794.0" r="10" fill="#76b7b2"/>
<circle cx="1526.8" cy="794.0" r="10" fill="#76b7b2"/>
<circle cx="1577.6" cy="794.0" r="10" fill="#76b7b2"/>
<circle cx="1628.3" cy="794.0" r="10" fill="#76b7b2"/>
<circle cx="1679.0" cy="739.0" r="10" fill="#76b7b2"/>
<circle cx="1729.7" cy="739.0" r="10" fill="#76b7b2"/>
<circle cx="1780.5" cy="684.0" r="10" fill="#76b7b2"/>
<circle cx="1831.2" cy="629.0" r="10" fill="#76b7b2"/>
<circle cx="1881.9" cy="629.0" r="10" fill="#76b7b2"/>
<circle cx="1323.9" cy="684.0" r="10" fill="#e15759"/>
<circle cx="1374.6" cy="629.0" r="10" fill="#e15759"/>
<circle cx="1425.4" cy="629.0" r="10" fill="#e15759"/>
<circle cx="1476.1" cy="629.0" r="10" fill="#e15759"/>
<circle cx="1526.8" cy="629.0" r="10" fill="#e15759"/>
<circle cx="1577.6" cy="739.0" r="10" fill="#e15759"/>
<circle cx="1628.3" cy="739.0" r="10" fill="#e15759"/>
<circle cx="1679.0" cy="794.0" r="10" fill="#e15759"/>
<circle cx="1729.7" cy="794.0" r="10" fill="#e15759"/>
<circle cx="1780.5" cy="794.0" r="10" fill="#e15759"/>
<circle cx="1831.2" cy="794.0" r="10" fill="#e15759"/>
<circle cx="1881.9" cy="794.0" r="10" fill="#e15759"/>
<circle cx="1323.9" cy="739.0" r="10" fill="#f28e2b"/>
<circle cx="1374.6" cy="739.0" r="10" fill="#f28e2b"/>
<circle cx="1425.4" cy="739.0" r="10" fill="#f28e2b"/>
<circle cx="1476.1" cy="739.0" r="10" fill="#f28e2b"/>
<circle cx="1526.8" cy="739.0" r="10" fill="#f28e2b"/>
<circle cx="1577.6" cy="684.0" r="10" fill="#f28e2b"/>
<circle cx="1628.3" cy="629.0" r="10" fill="#f28e2b"/>
<circle cx="1679.0" cy="629.0" r="10" fill="#f28e2b"/>
<circle cx="1729.7" cy="629.0" r="10" fill="#f28e2b"/>
<circle cx="1780.5" cy="629.0" r="10" fill="#f28e2b"/>
<circle cx="1831.2" cy="739.0" r="10" fill="#f28e2b"/>
<circle cx="1881.9" cy="739.0" r="10" fill="#f28e2b"/>
<circle cx="1323.9" cy="794.0" r="10" fill="#4e79a7"/>
<circle cx="1374.6" cy="849.0" r="10" fill="#4e79a7"/>
<circle cx="1425.4" cy="849.0" r="10" fill="#4e79a7"/>
<circle cx="1476.1" cy="849.0" r="10" fill="#4e79a7"/>
<circle cx="1526.8" cy="849.0" r="10" fill="#4e79a7"/>
<circle cx="1577.6" cy="849.0" r="10" fill="#4e79a7"/>
<circle cx="1628.3" cy="849.0" r="10" fill="#4e79a7"/>
<circle cx="1679.0" cy="849.0" r="10" fill="#4e79a7"/>
<circle cx="1729.7" cy="684.0" r="10" fill="#4e79a7"/>
<circle cx="1780.5" cy="739.0" r="10" fill="#4e79a7"/>
<circle cx="1831.2" cy="684.0" r="10" fill="#4e79a7"/>
<circle cx="1881.9" cy="684.0" r="10" fill="#4e79a7"/>
</svg>
<div class="a" style="left:1319.68px;top:787.60px;font-size:14.35px;line-height:14.35px;font-weight:bold;color:#111;transform:scaleX(1.0422);transform-origin:0 0;">4</div>
<div class="a" style="left:1370.15px;top:842.60px;font-size:14.35px;line-height:14.35px;font-weight:bold;color:#111;transform:scaleX(1.1152);transform-origin:0 0;">5</div>
<div class="a" style="left:1420.88px;top:842.60px;font-size:14.35px;line-height:14.35px;font-weight:bold;color:#111;transform:scaleX(1.1152);transform-origin:0 0;">5</div>
<div class="a" style="left:1471.61px;top:842.60px;font-size:14.35px;line-height:14.35px;font-weight:bold;color:#111;transform:scaleX(1.1152);transform-origin:0 0;">5</div>
<div class="a" style="left:1522.34px;top:842.60px;font-size:14.35px;line-height:14.35px;font-weight:bold;color:#111;transform:scaleX(1.1152);transform-origin:0 0;">5</div>
<div class="a" style="left:1573.07px;top:842.60px;font-size:14.35px;line-height:14.35px;font-weight:bold;color:#111;transform:scaleX(1.1152);transform-origin:0 0;">5</div>
<div class="a" style="left:1623.80px;top:842.60px;font-size:14.35px;line-height:14.35px;font-weight:bold;color:#111;transform:scaleX(1.1152);transform-origin:0 0;">5</div>
<div class="a" style="left:1674.53px;top:842.60px;font-size:14.35px;line-height:14.35px;font-weight:bold;color:#111;transform:scaleX(1.1152);transform-origin:0 0;">5</div>
<div class="a" style="left:1725.16px;top:677.60px;font-size:14.35px;line-height:14.35px;font-weight:bold;color:#111;transform:scaleX(1.1616);transform-origin:0 0;">2</div>
<div class="a" style="left:1776.07px;top:732.60px;font-size:14.35px;line-height:14.35px;font-weight:bold;color:#111;transform:scaleX(1.1264);transform-origin:0 0;">3</div>
<div class="a" style="left:1826.62px;top:677.60px;font-size:14.35px;line-height:14.35px;font-weight:bold;color:#111;transform:scaleX(1.1616);transform-origin:0 0;">2</div>
<div class="a" style="left:1877.35px;top:677.60px;font-size:14.35px;line-height:14.35px;font-weight:bold;color:#111;transform:scaleX(1.1616);transform-origin:0 0;">2</div>
<div class="a" style="left:1319.50px;top:732.60px;font-size:14.35px;line-height:14.35px;font-weight:bold;color:#111;transform:scaleX(1.1264);transform-origin:0 0;">3</div>
<div class="a" style="left:1370.23px;top:732.60px;font-size:14.35px;line-height:14.35px;font-weight:bold;color:#111;transform:scaleX(1.1264);transform-origin:0 0;">3</div>
<div class="a" style="left:1420.96px;top:732.60px;font-size:14.35px;line-height:14.35px;font-weight:bold;color:#111;transform:scaleX(1.1264);transform-origin:0 0;">3</div>
<div class="a" style="left:1471.69px;top:732.60px;font-size:14.35px;line-height:14.35px;font-weight:bold;color:#111;transform:scaleX(1.1264);transform-origin:0 0;">3</div>
<div class="a" style="left:1522.42px;top:732.60px;font-size:14.35px;line-height:14.35px;font-weight:bold;color:#111;transform:scaleX(1.1264);transform-origin:0 0;">3</div>
<div class="a" style="left:1572.97px;top:677.60px;font-size:14.35px;line-height:14.35px;font-weight:bold;color:#111;transform:scaleX(1.1616);transform-origin:0 0;">2</div>
<div class="a" style="left:1623.26px;top:622.60px;font-size:14.35px;line-height:14.35px;font-weight:bold;color:#111;transform:scaleX(1.1863);transform-origin:0 0;">1</div>
<div class="a" style="left:1673.99px;top:622.60px;font-size:14.35px;line-height:14.35px;font-weight:bold;color:#111;transform:scaleX(1.1863);transform-origin:0 0;">1</div>
<div class="a" style="left:1724.72px;top:622.60px;font-size:14.35px;line-height:14.35px;font-weight:bold;color:#111;transform:scaleX(1.1863);transform-origin:0 0;">1</div>
<div class="a" style="left:1775.45px;top:622.60px;font-size:14.35px;line-height:14.35px;font-weight:bold;color:#111;transform:scaleX(1.1863);transform-origin:0 0;">1</div>
<div class="a" style="left:1826.80px;top:732.60px;font-size:14.35px;line-height:14.35px;font-weight:bold;color:#111;transform:scaleX(1.1264);transform-origin:0 0;">3</div>
<div class="a" style="left:1877.53px;top:732.60px;font-size:14.35px;line-height:14.35px;font-weight:bold;color:#111;transform:scaleX(1.1264);transform-origin:0 0;">3</div>
<div class="a" style="left:1319.32px;top:677.60px;font-size:14.35px;line-height:14.35px;font-weight:bold;color:#111;transform:scaleX(1.1616);transform-origin:0 0;">2</div>
<div class="a" style="left:1369.61px;top:622.60px;font-size:14.35px;line-height:14.35px;font-weight:bold;color:#111;transform:scaleX(1.1863);transform-origin:0 0;">1</div>
<div class="a" style="left:1420.34px;top:622.60px;font-size:14.35px;line-height:14.35px;font-weight:bold;color:#111;transform:scaleX(1.1863);transform-origin:0 0;">1</div>
<div class="a" style="left:1471.07px;top:622.60px;font-size:14.35px;line-height:14.35px;font-weight:bold;color:#111;transform:scaleX(1.1863);transform-origin:0 0;">1</div>
<div class="a" style="left:1521.80px;top:622.60px;font-size:14.35px;line-height:14.35px;font-weight:bold;color:#111;transform:scaleX(1.1863);transform-origin:0 0;">1</div>
<div class="a" style="left:1573.15px;top:732.60px;font-size:14.35px;line-height:14.35px;font-weight:bold;color:#111;transform:scaleX(1.1264);transform-origin:0 0;">3</div>
<div class="a" style="left:1623.88px;top:732.60px;font-size:14.35px;line-height:14.35px;font-weight:bold;color:#111;transform:scaleX(1.1264);transform-origin:0 0;">3</div>
<div class="a" style="left:1674.79px;top:787.60px;font-size:14.35px;line-height:14.35px;font-weight:bold;color:#111;transform:scaleX(1.0422);transform-origin:0 0;">4</div>
<div class="a" style="left:1725.52px;top:787.60px;font-size:14.35px;line-height:14.35px;font-weight:bold;color:#111;transform:scaleX(1.0422);transform-origin:0 0;">4</div>
<div class="a" style="left:1776.25px;top:787.60px;font-size:14.35px;line-height:14.35px;font-weight:bold;color:#111;transform:scaleX(1.0422);transform-origin:0 0;">4</div>
<div class="a" style="left:1826.98px;top:787.60px;font-size:14.35px;line-height:14.35px;font-weight:bold;color:#111;transform:scaleX(1.0422);transform-origin:0 0;">4</div>
<div class="a" style="left:1877.71px;top:787.60px;font-size:14.35px;line-height:14.35px;font-weight:bold;color:#111;transform:scaleX(1.0422);transform-origin:0 0;">4</div>
<div class="a" style="left:1318.88px;top:622.60px;font-size:14.35px;line-height:14.35px;font-weight:bold;color:#111;transform:scaleX(1.1863);transform-origin:0 0;">1</div>
<div class="a" style="left:1370.05px;top:677.60px;font-size:14.35px;line-height:14.35px;font-weight:bold;color:#111;transform:scaleX(1.1616);transform-origin:0 0;">2</div>
<div class="a" style="left:1420.78px;top:677.60px;font-size:14.35px;line-height:14.35px;font-weight:bold;color:#111;transform:scaleX(1.1616);transform-origin:0 0;">2</div>
<div class="a" style="left:1471.87px;top:787.60px;font-size:14.35px;line-height:14.35px;font-weight:bold;color:#111;transform:scaleX(1.0422);transform-origin:0 0;">4</div>
<div class="a" style="left:1522.60px;top:787.60px;font-size:14.35px;line-height:14.35px;font-weight:bold;color:#111;transform:scaleX(1.0422);transform-origin:0 0;">4</div>
<div class="a" style="left:1573.33px;top:787.60px;font-size:14.35px;line-height:14.35px;font-weight:bold;color:#111;transform:scaleX(1.0422);transform-origin:0 0;">4</div>
<div class="a" style="left:1624.06px;top:787.60px;font-size:14.35px;line-height:14.35px;font-weight:bold;color:#111;transform:scaleX(1.0422);transform-origin:0 0;">4</div>
<div class="a" style="left:1674.61px;top:732.60px;font-size:14.35px;line-height:14.35px;font-weight:bold;color:#111;transform:scaleX(1.1264);transform-origin:0 0;">3</div>
<div class="a" style="left:1725.34px;top:732.60px;font-size:14.35px;line-height:14.35px;font-weight:bold;color:#111;transform:scaleX(1.1264);transform-origin:0 0;">3</div>
<div class="a" style="left:1775.89px;top:677.60px;font-size:14.35px;line-height:14.35px;font-weight:bold;color:#111;transform:scaleX(1.1616);transform-origin:0 0;">2</div>
<div class="a" style="left:1826.18px;top:622.60px;font-size:14.35px;line-height:14.35px;font-weight:bold;color:#111;transform:scaleX(1.1863);transform-origin:0 0;">1</div>
<div class="a" style="left:1876.91px;top:622.60px;font-size:14.35px;line-height:14.35px;font-weight:bold;color:#111;transform:scaleX(1.1863);transform-origin:0 0;">1</div>
<div class="a" style="left:1319.42px;top:842.60px;font-size:14.35px;line-height:14.35px;font-weight:bold;color:#111;transform:scaleX(1.1152);transform-origin:0 0;">5</div>
<div class="a" style="left:1370.41px;top:787.60px;font-size:14.35px;line-height:14.35px;font-weight:bold;color:#111;transform:scaleX(1.0422);transform-origin:0 0;">4</div>
<div class="a" style="left:1421.14px;top:787.60px;font-size:14.35px;line-height:14.35px;font-weight:bold;color:#111;transform:scaleX(1.0422);transform-origin:0 0;">4</div>
<div class="a" style="left:1471.51px;top:677.60px;font-size:14.35px;line-height:14.35px;font-weight:bold;color:#111;transform:scaleX(1.1616);transform-origin:0 0;">2</div>
<div class="a" style="left:1522.24px;top:677.60px;font-size:14.35px;line-height:14.35px;font-weight:bold;color:#111;transform:scaleX(1.1616);transform-origin:0 0;">2</div>
<div class="a" style="left:1572.53px;top:622.60px;font-size:14.35px;line-height:14.35px;font-weight:bold;color:#111;transform:scaleX(1.1863);transform-origin:0 0;">1</div>
<div class="a" style="left:1623.70px;top:677.60px;font-size:14.35px;line-height:14.35px;font-weight:bold;color:#111;transform:scaleX(1.1616);transform-origin:0 0;">2</div>
<div class="a" style="left:1674.43px;top:677.60px;font-size:14.35px;line-height:14.35px;font-weight:bold;color:#111;transform:scaleX(1.1616);transform-origin:0 0;">2</div>
<div class="a" style="left:1725.26px;top:842.60px;font-size:14.35px;line-height:14.35px;font-weight:bold;color:#111;transform:scaleX(1.1152);transform-origin:0 0;">5</div>
<div class="a" style="left:1775.99px;top:842.60px;font-size:14.35px;line-height:14.35px;font-weight:bold;color:#111;transform:scaleX(1.1152);transform-origin:0 0;">5</div>
<div class="a" style="left:1826.72px;top:842.60px;font-size:14.35px;line-height:14.35px;font-weight:bold;color:#111;transform:scaleX(1.1152);transform-origin:0 0;">5</div>
<div class="a" style="left:1877.45px;top:842.60px;font-size:14.35px;line-height:14.35px;font-weight:bold;color:#111;transform:scaleX(1.1152);transform-origin:0 0;">5</div>
<div class="a" style="left:1298.3px;top:905px;width:1px;height:3px;background:#fbfaf6"></div>
<div class="a" style="left:1349.0px;top:905px;width:1px;height:3px;background:#fbfaf6"></div>
<div class="a" style="left:1399.8px;top:905px;width:1px;height:3px;background:#fbfaf6"></div>
<div class="a" style="left:1450.5px;top:905px;width:1px;height:3px;background:#fbfaf6"></div>
<div class="a" style="left:1501.2px;top:905px;width:1px;height:3px;background:#fbfaf6"></div>
<div class="a" style="left:1552.0px;top:905px;width:1px;height:3px;background:#fbfaf6"></div>
<div class="a" style="left:1602.7px;top:905px;width:1px;height:3px;background:#fbfaf6"></div>
<div class="a" style="left:1653.4px;top:905px;width:1px;height:3px;background:#fbfaf6"></div>
<div class="a" style="left:1704.1px;top:905px;width:1px;height:3px;background:#fbfaf6"></div>
<div class="a" style="left:1754.9px;top:905px;width:1px;height:3px;background:#fbfaf6"></div>
<div class="a" style="left:1805.6px;top:905px;width:1px;height:3px;background:#fbfaf6"></div>
<div class="a" style="left:1856.3px;top:905px;width:1px;height:3px;background:#fbfaf6"></div>
<div class="a" style="left:1315.70px;top:933.92px;font-size:16.23px;line-height:16.23px;font-weight:bold;color:#111;transform:rotate(-90deg) scaleX(0.9063);transform-origin:0 0">Jan</div>
<div class="a" style="left:1366.43px;top:934.63px;font-size:16.23px;line-height:16.23px;font-weight:bold;color:#111;transform:rotate(-90deg) scaleX(0.8817);transform-origin:0 0">Feb</div>
<div class="a" style="left:1417.16px;top:937.83px;font-size:16.23px;line-height:16.23px;font-weight:bold;color:#111;transform:rotate(-90deg) scaleX(0.9785);transform-origin:0 0">Mar</div>
<div class="a" style="left:1467.89px;top:934.46px;font-size:16.23px;line-height:16.23px;font-weight:bold;color:#111;transform:rotate(-90deg) scaleX(0.8958);transform-origin:0 0">Apr</div>
<div class="a" style="left:1518.62px;top:940.01px;font-size:16.23px;line-height:16.23px;font-weight:bold;color:#111;transform:rotate(-90deg) scaleX(0.9529);transform-origin:0 0">May</div>
<div class="a" style="left:1569.35px;top:933.61px;font-size:16.23px;line-height:16.23px;font-weight:bold;color:#111;transform:rotate(-90deg) scaleX(0.8625);transform-origin:0 0">Jun</div>
<div class="a" style="left:1620.08px;top:929.71px;font-size:16.23px;line-height:16.23px;font-weight:bold;color:#111;transform:rotate(-90deg) scaleX(0.8562);transform-origin:0 0">Jul</div>
<div class="a" style="left:1670.81px;top:936.76px;font-size:16.23px;line-height:16.23px;font-weight:bold;color:#111;transform:rotate(-90deg) scaleX(0.8768);transform-origin:0 0">Aug</div>
<div class="a" style="left:1721.54px;top:934.22px;font-size:16.23px;line-height:16.23px;font-weight:bold;color:#111;transform:rotate(-90deg) scaleX(0.8587);transform-origin:0 0">Sep</div>
<div class="a" style="left:1772.27px;top:933.90px;font-size:16.23px;line-height:16.23px;font-weight:bold;color:#111;transform:rotate(-90deg) scaleX(0.9193);transform-origin:0 0">Oct</div>
<div class="a" style="left:1823.00px;top:936.65px;font-size:16.23px;line-height:16.23px;font-weight:bold;color:#111;transform:rotate(-90deg) scaleX(0.8970);transform-origin:0 0">Nov</div>
<div class="a" style="left:1873.73px;top:934.70px;font-size:16.23px;line-height:16.23px;font-weight:bold;color:#111;transform:rotate(-90deg) scaleX(0.8498);transform-origin:0 0">Dec</div>

<!-- bottom tabs -->
<div class="a" id="tabs"></div>
<div class="a" style="left:0;top:958px;width:1920px;height:1px;background:#cfcfcf"></div>
<div class="a" style="left:0;top:994px;width:1920px;height:1px;background:#d4d4d4"></div>
<div class="a" style="left:0;top:995px;width:1920px;height:7px;background:#ececec"></div>
<div class="a" style="left:162.5px;top:959px;width:1px;height:35px;background:#cfcfcf"></div>
<div class="a" style="left:246.5px;top:959px;width:1px;height:35px;background:#cfcfcf"></div>
<div class="a" style="left:330px;top:959px;width:1px;height:35px;background:#cfcfcf"></div>
<div class="a" style="left:481px;top:959px;width:1px;height:35px;background:#cfcfcf"></div>
<div class="a" style="left:657.5px;top:959px;width:1px;height:35px;background:#cfcfcf"></div>
<div class="a" style="left:907.5px;top:959px;width:1px;height:35px;background:#cfcfcf"></div>
<div class="a" style="left:1157.7px;top:959px;width:1px;height:35px;background:#cfcfcf"></div>
<svg class="a" style="left:10px;top:969px" width="10" height="13" viewBox="0 0 10 13"><path d="M1.5 2.5v8c0 1 1.5 1.5 3.5 1.5s3.5-.5 3.5-1.5v-8" fill="none" stroke="#666"/><ellipse cx="5" cy="2.5" rx="3.5" ry="1.5" fill="none" stroke="#666"/></svg>
<div class="a" style="left:1158px;top:959px;width:125px;height:36px;background:#fff;border-right:1px solid #cfcfcf"></div>
<svg class="a" style="left:1165px;top:969px" width="14" height="14" viewBox="0 0 14 14"><rect x="1.5" y="1.5" width="11" height="11" fill="none" stroke="#555"/><path d="M7 1.5v11M1.5 7h11" stroke="#555"/></svg>
<svg class="a" style="left:1291px;top:967px" width="18" height="18" viewBox="0 0 18 18"><rect x="1.5" y="2.5" width="10" height="10" fill="none" stroke="#555"/><path d="M4.5 10V7M6.5 10V5M8.5 10V6" stroke="#555"/><path d="M13 9v8M9 13h8" stroke="#333" stroke-width="1.8"/></svg>
<div class="a" style="left:1314.5px;top:959px;width:1px;height:35px;background:#cfcfcf"></div>
<svg class="a" style="left:1323px;top:967px" width="18" height="18" viewBox="0 0 18 18"><rect x="1.5" y="2.5" width="10" height="10" fill="none" stroke="#555"/><path d="M6.5 2.5v10M1.5 7.5h10" stroke="#555"/><path d="M13 9v8M9 13h8" stroke="#333" stroke-width="1.8"/></svg>
<div class="a" style="left:1346px;top:959px;width:1px;height:35px;background:#cfcfcf"></div>
<svg class="a" style="left:1355px;top:967px" width="18" height="18" viewBox="0 0 18 18"><path d="M1.5 2.5h4v10h-4zM5.5 4.5h6v8h-6" fill="none" stroke="#555"/><path d="M13 9v8M9 13h8" stroke="#333" stroke-width="1.8"/></svg>
<div class="a" style="left:1378px;top:959px;width:1px;height:35px;background:#cfcfcf"></div>
<div class="a" id="tabs_end"></div>
<div class="a" style="left:1502px;top:995px;width:1px;height:7px;background:#d0d0d0"></div>
<div class="a" style="left:1658.6px;top:995px;width:1px;height:7px;background:#d0d0d0"></div>
<div class="a" style="left:1690.3px;top:995px;width:1px;height:7px;background:#d0d0d0"></div>
<div class="a" style="left:1722.5px;top:995px;width:1px;height:7px;background:#d0d0d0"></div>
<div class="a" style="left:1779.6px;top:995px;width:1px;height:7px;background:#d0d0d0"></div>
<div class="a" style="left:1850.5px;top:995px;width:1px;height:7px;background:#d0d0d0"></div>
<div class="a" style="left:1859px;top:1001px;width:3px;height:1px;background:#aaa"></div><div class="a" style="left:1863px;top:1001px;width:3px;height:1px;background:#aaa"></div><div class="a" style="left:1867px;top:1001px;width:3px;height:1px;background:#aaa"></div><div class="a" style="left:1881px;top:1001px;width:11px;height:1px;background:#aaa"></div><div class="a" style="left:1903px;top:1001px;width:11px;height:1px;background:#555"></div>
<div class="a" style="left:27.01px;top:7.74px;font-size:16.96px;line-height:16.96px;font-weight:normal;color:#7b7b7b;transform:scaleX(0.8616);transform-origin:0 0;">Tableau Public - Ecommerce Sales Dashboard</div>
<div class="a" style="left:7.18px;top:33.57px;font-size:17.39px;line-height:17.39px;font-weight:normal;color:#1a1a1a;transform:scaleX(0.8751);transform-origin:0 0;">File</div>
<div class="a" style="left:46.18px;top:33.57px;font-size:17.39px;line-height:17.39px;font-weight:normal;color:#1a1a1a;transform:scaleX(0.8781);transform-origin:0 0;">Data</div>
<div class="a" style="left:95.43px;top:33.57px;font-size:17.39px;line-height:17.39px;font-weight:normal;color:#1a1a1a;transform:scaleX(0.8292);transform-origin:0 0;">Worksheet</div>
<div class="a" style="left:179.29px;top:33.57px;font-size:17.39px;line-height:17.39px;font-weight:normal;color:#1a1a1a;transform:scaleX(0.8701);transform-origin:0 0;">Dashboard</div>
<div class="a" style="left:268.34px;top:33.57px;font-size:17.39px;line-height:17.39px;font-weight:normal;color:#1a1a1a;transform:scaleX(0.8437);transform-origin:0 0;">Story</div>
<div class="a" style="left:319.70px;top:33.57px;font-size:17.39px;line-height:17.39px;font-weight:normal;color:#1a1a1a;transform:scaleX(0.8134);transform-origin:0 0;">Analysis</div>
<div class="a" style="left:387.02px;top:33.57px;font-size:17.39px;line-height:17.39px;font-weight:normal;color:#1a1a1a;transform:scaleX(0.9168);transform-origin:0 0;">Map</div>
<div class="a" style="left:432.59px;top:33.57px;font-size:17.39px;line-height:17.39px;font-weight:normal;color:#1a1a1a;transform:scaleX(0.8718);transform-origin:0 0;">Format</div>
<div class="a" style="left:496.26px;top:33.57px;font-size:17.39px;line-height:17.39px;font-weight:normal;color:#1a1a1a;transform:scaleX(0.8146);transform-origin:0 0;">Server</div>
<div class="a" style="left:554.02px;top:33.57px;font-size:17.39px;line-height:17.39px;font-weight:normal;color:#1a1a1a;transform:scaleX(0.8847);transform-origin:0 0;">Window</div>
<div class="a" style="left:623.92px;top:33.57px;font-size:17.39px;line-height:17.39px;font-weight:normal;color:#1a1a1a;transform:scaleX(0.9212);transform-origin:0 0;">Help</div>
<div class="a" style="left:54.35px;top:69.53px;font-size:20.14px;line-height:20.14px;font-weight:normal;color:#2a7ab3;transform:scaleX(0.8692);transform-origin:0 0;">Tableau Desktop Public Edition</div>
<div class="a" style="left:1764.78px;top:70.55px;font-size:19.71px;line-height:19.71px;font-weight:normal;color:#2a7ab3;transform:scaleX(0.9035);transform-origin:0 0;">Buy Tableau</div>
<div class="a" style="left:1819.03px;top:118.62px;font-size:19.57px;line-height:19.57px;font-weight:normal;color:#222;transform:scaleX(0.8767);transform-origin:0 0;">Show Me</div>
<div class="a" style="left:21.79px;top:162.59px;font-size:17.54px;line-height:17.54px;font-weight:bold;color:#111;transform:scaleX(0.9747);transform-origin:0 0;">Dashboard</div>
<div class="a" style="left:161.06px;top:162.53px;font-size:18.55px;line-height:18.55px;font-weight:normal;color:#333;transform:scaleX(0.9672);transform-origin:0 0;">Layout</div>
<svg class="a" style="left:246px;top:165px" width="10" height="12"><path d="M7.5 1.5L2.5 6l5 4.5" fill="none" stroke="#555" stroke-width="1.3"/></svg>
<div class="a" style="left:32.27px;top:204.57px;font-size:17.97px;line-height:17.97px;font-weight:normal;color:#444;transform:scaleX(0.9973);transform-origin:0 0;">Default</div>
<div class="a" style="left:42.50px;top:230.72px;font-size:17.97px;line-height:17.97px;font-weight:normal;color:#444;transform:scaleX(0.9720);transform-origin:0 0;">Phone</div>
<div class="a" style="left:77.49px;top:270.57px;font-size:15.22px;line-height:15.22px;font-weight:normal;color:#444;transform:scaleX(0.9903);transform-origin:0 0;">Device Preview</div>
<div class="a" style="left:18.39px;top:312.75px;font-size:15.65px;line-height:15.65px;font-weight:bold;color:#333;transform:scaleX(1.0929);transform-origin:0 0;">Size</div>
<div class="a" style="left:19.70px;top:338.65px;font-size:15.65px;line-height:15.65px;font-weight:normal;color:#444;transform:scaleX(1.0118);transform-origin:0 0;">Automatic</div>
<div class="a" style="left:18.38px;top:388.56px;font-size:16.52px;line-height:16.52px;font-weight:bold;color:#333;transform:scaleX(1.0408);transform-origin:0 0;">Sheets</div>
<div class="a" style="left:45.84px;top:423.62px;font-size:17.68px;line-height:17.68px;font-weight:normal;color:#444;transform:scaleX(0.9490);transform-origin:0 0;">Sales KPI</div>
<div class="a" style="left:45.17px;top:455.62px;font-size:17.68px;line-height:17.68px;font-weight:normal;color:#444;transform:scaleX(1.0138);transform-origin:0 0;">Profit KPI</div>
<div class="a" style="left:45.81px;top:487.62px;font-size:17.68px;line-height:17.68px;font-weight:normal;color:#444;transform:scaleX(0.9922);transform-origin:0 0;">Order Quantity ...</div>
<div class="a" style="left:45.20px;top:519.62px;font-size:17.68px;line-height:17.68px;font-weight:normal;color:#444;transform:scaleX(0.9900);transform-origin:0 0;">Market Share b...</div>
<div class="a" style="left:45.74px;top:551.62px;font-size:17.68px;line-height:17.68px;font-weight:normal;color:#444;transform:scaleX(0.9748);transform-origin:0 0;">Category wise ...</div>
<div class="a" style="left:45.20px;top:583.62px;font-size:17.68px;line-height:17.68px;font-weight:normal;color:#444;transform:scaleX(0.9887);transform-origin:0 0;">Market wise ...</div>
<div class="a" style="left:11.64px;top:687.72px;font-size:15.80px;line-height:15.80px;font-weight:bold;color:#333;transform:scaleX(1.0400);transform-origin:0 0;">Objects</div>
<div class="a" style="left:40.11px;top:740.56px;font-size:16.81px;line-height:16.81px;font-weight:normal;color:#333;transform:scaleX(0.9569);transform-origin:0 0;">Horizontal Container</div>
<div class="a" style="left:41.32px;top:765.56px;font-size:16.81px;line-height:16.81px;font-weight:normal;color:#333;transform:scaleX(0.9470);transform-origin:0 0;">Vertical Container</div>
<div class="a" style="left:41.09px;top:790.56px;font-size:16.81px;line-height:16.81px;font-weight:normal;color:#333;transform:scaleX(0.9293);transform-origin:0 0;">Text</div>
<div class="a" style="left:40.11px;top:815.56px;font-size:16.81px;line-height:16.81px;font-weight:normal;color:#333;transform:scaleX(0.9585);transform-origin:0 0;">Extension</div>
<div class="a" style="left:40.12px;top:840.56px;font-size:16.81px;line-height:16.81px;font-weight:normal;color:#333;transform:scaleX(0.9548);transform-origin:0 0;">Pulse Metric</div>
<div class="a" style="left:39.96px;top:865.56px;font-size:16.81px;line-height:16.81px;font-weight:normal;color:#333;transform:scaleX(0.9535);transform-origin:0 0;">Image</div>
<div class="a" style="left:52.84px;top:895.66px;font-size:16.81px;line-height:16.81px;font-weight:bold;color:#fff;transform:scaleX(0.9507);transform-origin:0 0;">Tiled</div>
<div class="a" style="left:159.34px;top:895.66px;font-size:16.81px;line-height:16.81px;font-weight:normal;color:#333;transform:scaleX(1.0117);transform-origin:0 0;">Floating</div>
<div class="a" style="left:44.28px;top:929.71px;font-size:16.81px;line-height:16.81px;font-weight:normal;color:#333;transform:scaleX(0.9530);transform-origin:0 0;">Show dashboard title</div>
<div class="a" style="left:24.46px;top:967.58px;font-size:16.38px;line-height:16.38px;font-weight:normal;color:#555;transform:scaleX(0.9449);transform-origin:0 0;">Data Source</div>
<div class="a" style="left:169.73px;top:967.58px;font-size:16.38px;line-height:16.38px;font-weight:normal;color:#555;transform:scaleX(0.9098);transform-origin:0 0;">Sales KPI</div>
<div class="a" style="left:252.33px;top:967.58px;font-size:16.38px;line-height:16.38px;font-weight:normal;color:#555;transform:scaleX(0.9695);transform-origin:0 0;">Profit KPI</div>
<div class="a" style="left:336.30px;top:967.58px;font-size:16.38px;line-height:16.38px;font-weight:normal;color:#555;transform:scaleX(0.9479);transform-origin:0 0;">Order Quantity KPI</div>
<div class="a" style="left:487.28px;top:967.58px;font-size:16.38px;line-height:16.38px;font-weight:normal;color:#555;transform:scaleX(0.9342);transform-origin:0 0;">Market Share by Sales</div>
<div class="a" style="left:663.26px;top:967.58px;font-size:16.38px;line-height:16.38px;font-weight:normal;color:#555;transform:scaleX(0.9072);transform-origin:0 0;">Category wise YTD vs PYTD Sales</div>
<div class="a" style="left:913.04px;top:967.58px;font-size:16.38px;line-height:16.38px;font-weight:normal;color:#555;transform:scaleX(0.9596);transform-origin:0 0;">Market wise Customer Aquisitio...</div>
<div class="a" style="left:1181.73px;top:966.66px;font-size:18.70px;line-height:18.70px;font-weight:bold;color:#444;transform:scaleX(0.8017);transform-origin:0 0;">Dashboard 1</div>
</body></html>
